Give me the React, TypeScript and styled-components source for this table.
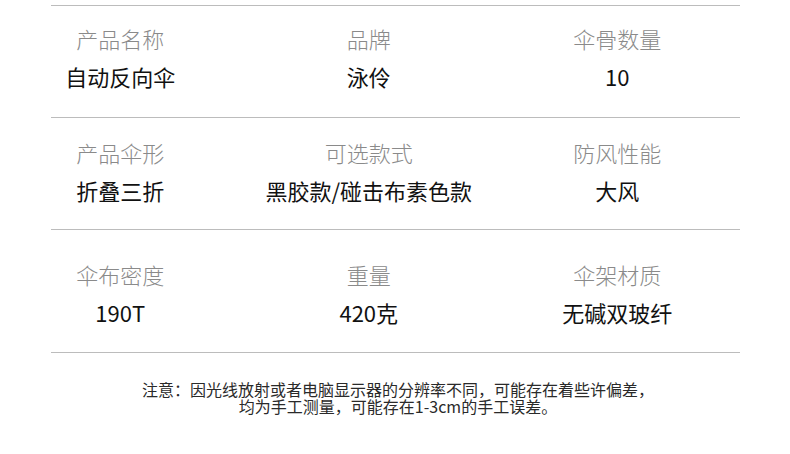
import React from 'react';
import styled, { createGlobalStyle } from 'styled-components';

const GlobalStyle = createGlobalStyle`
  body {
    margin: 0;
    background: #fff;
    font-family: "Noto Sans CJK SC", "Noto Sans", sans-serif;
  }
`;

const Page = styled.div`
  width: 790px;
  height: 454px;
  padding-top: 5px;
  box-sizing: border-box;
  overflow: hidden;
`;

const Divider = styled.div`
  height: 1px;
  margin: 0 50px 0 51px;
  background: #bcbcbc;
`;

const Row = styled.div<{ $top: number; $bottom: number }>`
  display: grid;
  grid-template-columns: repeat(3, 248.5px);
  margin-left: -4px;
  padding: ${(p) => p.$top}px 0 ${(p) => p.$bottom}px;
`;

const Cell = styled.div`
  display: flex;
  flex-direction: column;
  align-items: center;
  white-space: nowrap;
`;

const Label = styled.div`
  font-size: 22px;
  line-height: 38px;
  font-weight: 300;
  color: #8a8a8a;
`;

const Value = styled.div`
  font-size: 22px;
  line-height: 38px;
  color: #111;
`;

const Note = styled.p`
  margin: 28px 0 0;
  padding-left: 6px;
  text-align: center;
  font-size: 16px;
  line-height: 17px;
  color: #2a2a2a;
`;

type Spec = { label: string; value: string };

const rows: { top: number; bottom: number; items: Spec[] }[] = [
  {
    top: 13,
    bottom: 22,
    items: [
      { label: '产品名称', value: '自动反向伞' },
      { label: '品牌', value: '泳伶' },
      { label: '伞骨数量', value: '10' },
    ],
  },
  {
    top: 15,
    bottom: 20,
    items: [
      { label: '产品伞形', value: '折叠三折' },
      { label: '可选款式', value: '黑胶款/碰击布素色款' },
      { label: '防风性能', value: '大风' },
    ],
  },
  {
    top: 25,
    bottom: 21,
    items: [
      { label: '伞布密度', value: '190T' },
      { label: '重量', value: '420克' },
      { label: '伞架材质', value: '无碱双玻纤' },
    ],
  },
];

export default function App() {
  return (
    <Page>
      <GlobalStyle />
      <Divider />
      {rows.map((r, i) => (
        <React.Fragment key={i}>
          <Row $top={r.top} $bottom={r.bottom}>
            {r.items.map((it) => (
              <Cell key={it.label}>
                <Label>{it.label}</Label>
                <Value>{it.value}</Value>
              </Cell>
            ))}
          </Row>
          <Divider />
        </React.Fragment>
      ))}
      <Note>
        注意：因光线放射或者电脑显示器的分辨率不同，可能存在着些许偏差，
        <br />
        均为手工测量，可能存在1-3cm的手工误差。
      </Note>
    </Page>
  );
}
